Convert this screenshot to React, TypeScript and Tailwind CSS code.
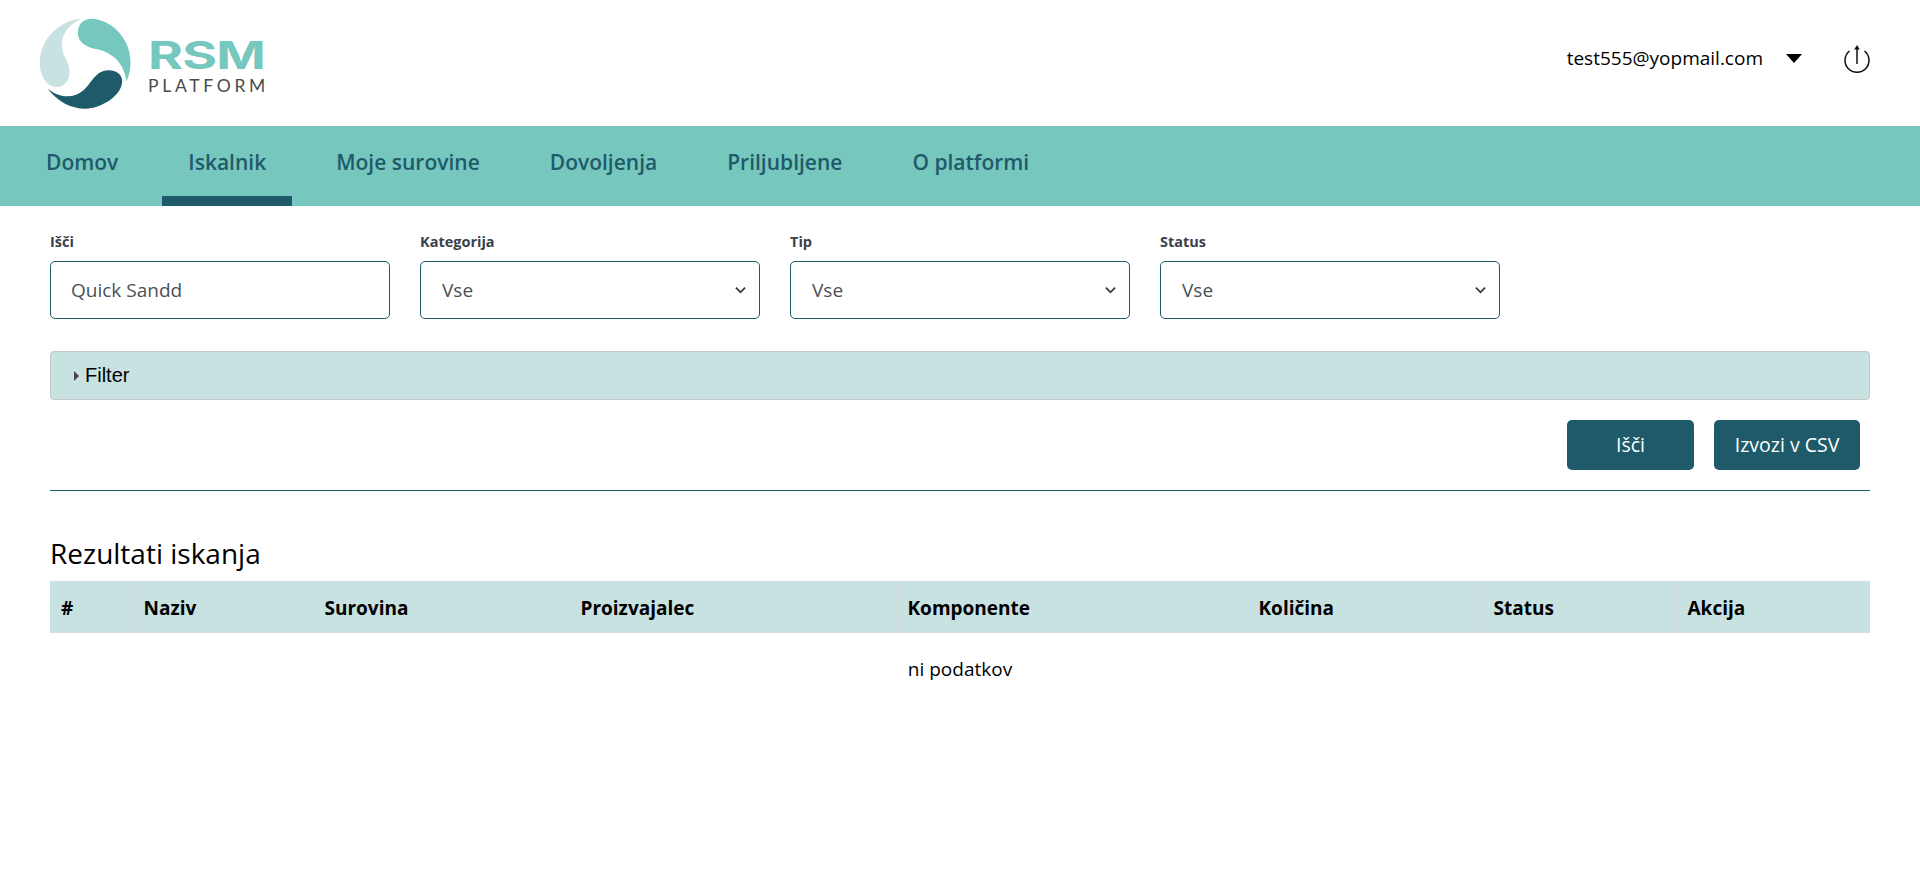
import React from "react";

const navItems = ["Domov", "Iskalnik", "Moje surovine", "Dovoljenja", "Priljubljene", "O platformi"];

const columns = [
  { label: "#", width: "w-[82px]" },
  { label: "Naziv", width: "w-[181px]" },
  { label: "Surovina", width: "w-[256px]" },
  { label: "Proizvajalec", width: "w-[327px]" },
  { label: "Komponente", width: "w-[351px]" },
  { label: "Količina", width: "w-[235px]" },
  { label: "Status", width: "w-[194px]" },
  { label: "Akcija", width: "w-[194px]" },
];

function Logo() {
  return (
    <div className="flex items-center">
      <svg viewBox="110 50 290 285" className="w-[97px] h-[95px] ml-[37px]">
        <path
          fill="#76c7bd"
          d="M232 100 C232 72 252 57 275 58 C340 62 392 125 390 190 C390 212 385 232 378 246 C370 190 335 160 290 150 C255 143 232 128 232 100 Z"
        />
        <path
          fill="#c8e1e1"
          d="M245 57 C175 65 118 120 118 190 C118 225 135 263 170 263 C192 263 207 242 207 218 C207 185 183 170 184 135 C185 100 212 70 245 57 Z"
        />
        <path
          fill="#1f5a6b"
          d="M142 268 C170 305 210 328 255 328 C300 328 365 290 365 245 C365 225 345 213 325 213 C285 213 275 250 250 272 C220 298 180 298 142 268 Z"
        />
      </svg>
      <div className="ml-[14px] mt-[6px] flex flex-col">
        <span className="font-['Inter',sans-serif] font-bold text-[38px] leading-[30px] text-[#76c7bd] origin-left scale-x-[1.4] tracking-[-0.5px]">
          RSM
        </span>
        <span className="mt-[9px] font-['Lato',sans-serif] text-[17.5px] leading-[14px] tracking-[3.7px] text-[#4a4a4a]">
          PLATFORM
        </span>
      </div>
    </div>
  );
}

function PowerIcon() {
  return (
    <svg viewBox="0 0 28 30" className="w-[28px] h-[30px]" fill="none" stroke="#111" strokeWidth="1.5">
      <path d="M6.5 7 A12 12 0 1 0 21.5 7" />
      <path d="M14 4 V20" />
      <path d="M11.2 5.5 L14 1 L16.8 5.5 Z" fill="#111" stroke="none" />
    </svg>
  );
}

function Field({ label, children }: { label: string; children: React.ReactNode }) {
  return (
    <div className="flex flex-col w-[340px]">
      <label className="text-[14.5px] leading-[20px] font-bold text-[#3a3f4b] mb-[9px] h-[20px]">{label}</label>
      {children}
    </div>
  );
}

function SelectBox() {
  return (
    <div className="relative h-[58px] w-full rounded-[5px] border border-[#1f5a6b] bg-white">
      <select className="h-full w-full appearance-none bg-transparent pl-[21px] pr-[40px] text-[19px] text-[#495057] outline-none">
        <option>Vse</option>
      </select>
      <svg
        viewBox="0 0 12 8"
        className="absolute right-[13px] top-[24px] w-[11px] h-[8px] pointer-events-none"
        fill="none"
        stroke="#343a40"
        strokeWidth="2"
      >
        <path d="M1 1.5 L6 6.5 L11 1.5" />
      </svg>
    </div>
  );
}

export default function App() {
  return (
    <div className="min-h-[885px] bg-white font-['Open_Sans',sans-serif] text-black">
      {/* Header */}
      <header className="h-[126px] flex items-center justify-between">
        <Logo />
        <div className="flex items-center mr-[49px] mb-[9px]">
          <span className="text-[19px] leading-[24px] text-black -mt-[2px]">test555@yopmail.com</span>
          <div className="ml-[23px] w-0 h-0 border-x-[8px] border-x-transparent border-t-[9px] border-t-black" />
          <div className="ml-[41px]">
            <PowerIcon />
          </div>
        </div>
      </header>

      {/* Nav */}
      <nav className="h-[80px] bg-[#76c7bd] flex pl-[20px] gap-[18px]">
        {navItems.map((item) => (
          <a
            key={item}
            className={`h-full px-[26px] pt-[22px] text-[21px] leading-[28px] font-semibold text-[#1f5a6b] ${
              item === "Iskalnik" ? "border-b-[10px] border-[#1f5a6b]" : ""
            }`}
          >
            {item}
          </a>
        ))}
      </nav>

      <main className="px-[50px] pt-[26px]">
        {/* Search form */}
        <div className="flex gap-[30px]">
          <Field label="Išči">
            <input
              readOnly
              value="Quick Sandd"
              className="h-[58px] w-full rounded-[5px] border border-[#1f5a6b] bg-white px-[20px] text-[19px] text-[#495057] outline-none"
            />
          </Field>
          <Field label="Kategorija">
            <SelectBox />
          </Field>
          <Field label="Tip">
            <SelectBox />
          </Field>
          <Field label="Status">
            <SelectBox />
          </Field>
        </div>

        <div className="mt-[32px] h-[49px] flex items-center rounded-[4px] border border-[#c2c9c9] bg-[#c8e1e1] pl-[23px]">
          <div className="w-0 h-0 border-y-[5px] border-y-transparent border-l-[5.5px] border-l-[#444]" />
          <span className="ml-[6px] pb-[2px] font-['Liberation_Sans',sans-serif] text-[20px]">Filter</span>
        </div>

        <div className="mt-[20px] flex justify-end gap-[20px] pr-[10px]">
          <button className="h-[50px] w-[127px] rounded-[5px] bg-[#1f5a6b] text-[19.5px] text-white">Išči</button>
          <button className="h-[50px] w-[146px] rounded-[5px] bg-[#1f5a6b] text-[19.5px] text-white">Izvozi v CSV</button>
        </div>

        <hr className="mt-[20px] border-t border-[#1f5a6b]" />

        <h2 className="mt-[42px] text-[28px] leading-[40px] text-black">Rezultati iskanja</h2>

        {/* Results */}
        <table className="mt-[8px] w-full table-fixed border-collapse">
          <colgroup>
            {columns.map((col) => (
              <col key={col.label} className={col.width} />
            ))}
          </colgroup>
          <thead>
            <tr className="h-[51px] bg-[#c8e1e1]">
              {columns.map((col) => (
                <th
                  key={col.label}
                  className="border-b border-r border-[#d6dddd] last:border-r-0 pl-[11px] pr-[10px] pt-[3px] text-left text-[19px] font-bold"
                >
                  {col.label}
                </th>
              ))}
            </tr>
          </thead>
          <tbody>
            <tr>
              <td colSpan={8} className="h-[73px] text-center text-[19px]">
                ni podatkov
              </td>
            </tr>
          </tbody>
        </table>
      </main>
    </div>
  );
}
